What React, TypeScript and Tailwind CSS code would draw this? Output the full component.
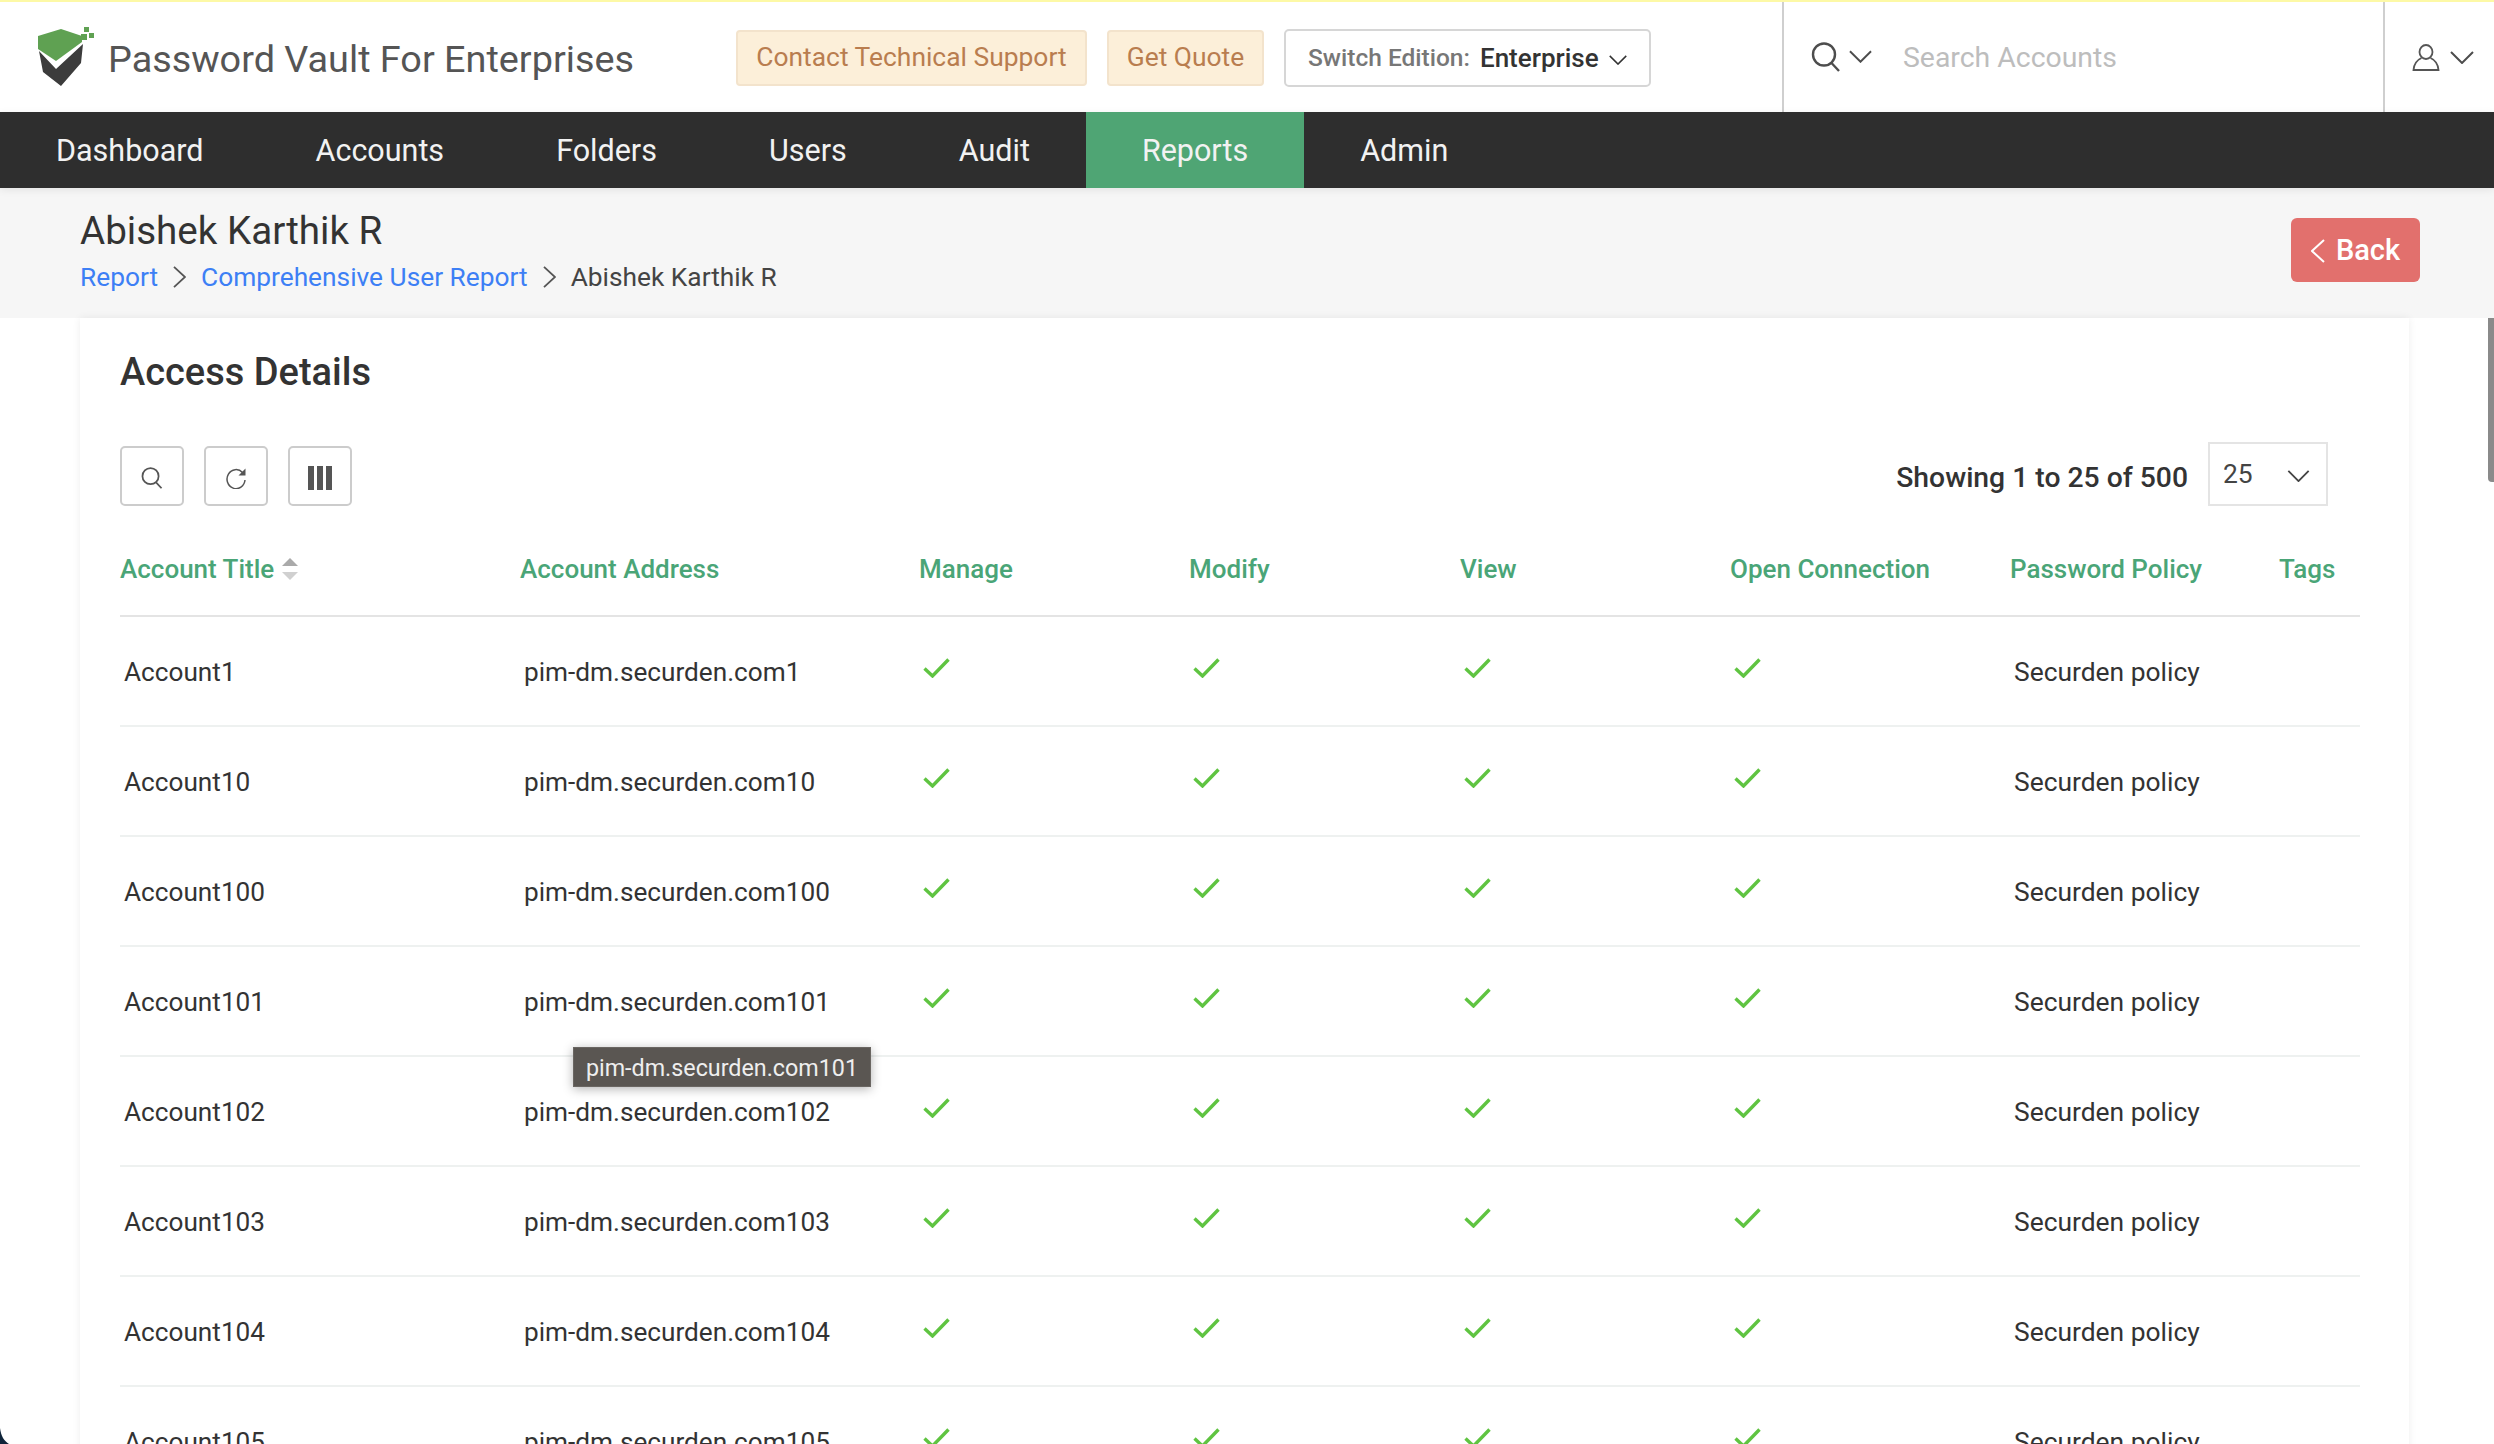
const accounts = ["1", "10", "100", "101", "102", "103", "104", "105"]

const navItems = ["Dashboard", "Accounts", "Folders", "Users", "Audit", "Reports", "Admin"]

function Caret({ className }: { className: string }) {
  return (
    <svg viewBox="0 0 24 13" fill="none" stroke="currentColor" strokeWidth="2" className={className}>
      <polyline points="1,1 12,12 23,1" />
    </svg>
  )
}

function ThinChevron({ className }: { className: string }) {
  return (
    <svg viewBox="0 0 14 24" fill="none" stroke="currentColor" strokeWidth="2" className={className}>
      <polyline points="1,1 13,12 1,23" />
    </svg>
  )
}

function Logo() {
  return (
    <svg viewBox="38 26 56 59" className="h-[59px] w-[56px] shrink-0">
      <polygon points="38,35 61,28 82,35 82,41 56,60 38,48" fill="#5fa152" />
      <polygon points="39,50 56,68 83,43 81,62 61,85 43,71" fill="#3c3c3c" />
      <rect x="84" y="26" width="5" height="5" fill="#5fa152" />
      <rect x="81" y="33" width="6" height="6" fill="#5fa152" />
      <rect x="89" y="32" width="5" height="5" fill="#5fa152" />
    </svg>
  )
}

function SearchIcon({ className }: { className: string }) {
  return (
    <svg viewBox="0 0 30 30" fill="none" stroke="currentColor" strokeWidth="2.4" className={className}>
      <circle cx="13" cy="12.5" r="11" />
      <line x1="20.5" y1="21" x2="28" y2="29" />
    </svg>
  )
}

function UserIcon() {
  return (
    <svg viewBox="0 0 28 27" fill="none" stroke="#555" strokeWidth="1.8" className="h-[27px] w-[28px]">
      <ellipse cx="14" cy="8" rx="6.5" ry="7" />
      <path d="M9.5 14 C5 16 2 20 1.5 26 L26.5 26 C26 20 23 16 18.5 14" />
    </svg>
  )
}

function RefreshIcon() {
  return (
    <svg viewBox="0 0 22 22" fill="none" stroke="#555" strokeWidth="1.5" className="h-[22px] w-[22px]">
      <path d="M17.5 5.5 A9 9.5 0 1 0 20 13" />
      <polygon points="20.5,1.5 20.5,8.5 13.5,8.5" fill="#555" stroke="none" />
    </svg>
  )
}

function ToolButton({ children }: { children: React.ReactNode }) {
  return (
    <button className="flex h-[60px] w-[64px] items-center justify-center rounded-[5px] border-2 border-[#cccccc] bg-white pt-[3px]">
      {children}
    </button>
  )
}

function CheckMark() {
  return (
    <svg viewBox="0 0 27 20" fill="none" stroke="#5fc441" strokeWidth="3.4" className="h-[20px] w-[27px]">
      <polyline points="1.5,10.5 9.5,18 25.5,1.5" />
    </svg>
  )
}

function Row({ id }: { id: string }) {
  return (
    <tr className="h-[110px] border-b-2 border-[#eef1f0] text-[26.2px] text-[#333333]">
      <td className="pl-1 pt-[3px] align-middle">Account{id}</td>
      <td className="pl-1 pt-[3px] align-middle">pim-dm.securden.com{id}</td>
      <td className="pl-1 align-middle"><div className="mb-[6px]"><CheckMark /></div></td>
      <td className="pl-1 align-middle"><div className="mb-[6px]"><CheckMark /></div></td>
      <td className="pl-1 align-middle"><div className="mb-[6px]"><CheckMark /></div></td>
      <td className="pl-1 align-middle"><div className="mb-[6px]"><CheckMark /></div></td>
      <td className="pl-1 pt-[3px] align-middle text-[26.4px]">Securden policy</td>
      <td />
    </tr>
  )
}

export default function App() {
  return (
    <div className="relative h-[1444px] w-[2494px] overflow-hidden bg-white font-['Roboto',sans-serif]">
      <div className="h-[2px] bg-[#fdf9a6]" />

      {/* Top bar */}
      <header className="flex h-[110px] items-stretch bg-white">
        <div className="flex items-center pb-[2px] pl-[38px]">
          <Logo />
          <span className="ml-[14px] mt-[7px] text-[37.8px] leading-none text-[#555555]">Password Vault For Enterprises</span>
        </div>
        <div className="ml-[102px] flex items-center gap-[20px] pt-[2px]">
          <span className="flex h-[56px] w-[351px] items-center justify-center rounded-[4px] border-2 border-[#f3e3cc] bg-[#fcefd9] text-[26.4px] text-[#b97d4f]">
            Contact Technical Support
          </span>
          <span className="flex h-[56px] w-[157px] items-center justify-center rounded-[4px] border-2 border-[#f3e3cc] bg-[#fcefd9] text-[26.4px] text-[#b97d4f]">
            Get Quote
          </span>
          <span className="flex h-[58px] w-[367px] items-center rounded-[5px] border-2 border-[#d6d6d6] bg-white pl-[22px]">
            <span className="text-[24.5px] font-medium text-[#777777]">Switch Edition:</span>
            <span className="ml-[10px] text-[26px] font-medium text-[#333333]">Enterprise</span>
            <Caret className="ml-[10px] mt-[4px] h-[10px] w-[18px] text-[#333333]" />
          </span>
        </div>
        <div className="ml-auto flex w-[601px] items-center border-l-2 border-[#cfcfcf] pl-[27px] pt-[1px]">
          <SearchIcon className="mb-[2px] h-[30px] w-[30px] text-[#4d4d4d]" />
          <Caret className="mb-[2px] ml-[8px] h-[13px] w-[23px] text-[#4d4d4d]" />
          <span className="ml-[31px] mt-[2px] text-[28.4px] text-[#bdbdbd]">Search Accounts</span>
        </div>
        <div className="flex w-[111px] items-center border-l-2 border-[#cfcfcf] pl-[27px]">
          <UserIcon />
          <Caret className="ml-[10px] h-[13px] w-[24px] text-[#4d4d4d]" />
        </div>
      </header>

      {/* Main nav */}
      <nav className="relative z-10 flex h-[76px] bg-[#2e2e2e] shadow-[0_2px_8px_rgba(0,0,0,0.08)]">
        {navItems.map((item) => (
          <a
            key={item}
            className={`flex items-center px-[56px] pt-[2px] text-[30.5px] text-[#f2f2f2] ${item === "Reports" ? "bg-[#4fa574]" : ""}`}
          >
            {item}
          </a>
        ))}
      </nav>

      {/* Page heading */}
      <div className="flex h-[130px] items-center justify-between bg-[#f6f6f6] pl-[80px] pr-[74px]">
        <div className="pb-[1px]">
          <h1 className="text-[38.6px] leading-[44px] text-[#333333]">Abishek Karthik R</h1>
          <div className="mt-[5px] flex items-center text-[26.3px] leading-[38px] text-[#444444]">
            <span className="text-[#3d7ff5]">Report</span>
            <ThinChevron className="mx-[15px] h-[22px] w-[13px] text-[#555555]" />
            <span className="text-[#3d7ff5]">Comprehensive User Report</span>
            <ThinChevron className="mx-[15px] h-[22px] w-[13px] text-[#555555]" />
            <span>Abishek Karthik R</span>
          </div>
        </div>
        <button className="mb-[6px] flex h-[64px] w-[129px] items-center justify-center rounded-[6px] bg-[#e2706d] pt-[2px] text-[29px] font-medium text-white">
          <ThinChevron className="mr-[11px] h-[26px] w-[14px] rotate-180" />
          Back
        </button>
      </div>

      {/* Card */}
      <main className="ml-[80px] w-[2329px] pl-[40px] pr-[49px] pt-[32px] shadow-[0_0_8px_rgba(0,0,0,0.07)]">
        <h2 className="text-[38px] font-medium leading-[44px] text-[#333333]">Access Details</h2>

        <div className="mt-[52px] flex items-start justify-between pr-[32px]">
          <div className="flex gap-[20px]">
            <ToolButton><SearchIcon className="h-[22px] w-[22px] text-[#555555]" /></ToolButton>
            <ToolButton><RefreshIcon /></ToolButton>
            <ToolButton>
              <span className="flex gap-[3px]">
                <span className="h-[24px] w-[6px] bg-[#555555]" />
                <span className="h-[24px] w-[6px] bg-[#555555]" />
                <span className="h-[24px] w-[6px] bg-[#555555]" />
              </span>
            </ToolButton>
          </div>
          <div className="flex items-start">
            <span className="mt-[11px] text-[28.3px] font-medium text-[#333333]">Showing 1 to 25 of 500</span>
            <div className="ml-[20px] flex h-[64px] w-[120px] -translate-y-[4px] items-center justify-between border-2 border-[#e4e4e4] pl-[13px] pr-[16px] pt-[2px] text-[26.4px] text-[#444444]">
              25
              <Caret className="mt-[2px] h-[12px] w-[23px] text-[#444444]" />
            </div>
          </div>
        </div>

        <table className="mt-[27px] w-[2240px] table-fixed border-collapse text-left">
          <colgroup>
            <col className="w-[400px]" />
            <col className="w-[399px]" />
            <col className="w-[270px]" />
            <col className="w-[271px]" />
            <col className="w-[270px]" />
            <col className="w-[280px]" />
            <col className="w-[269px]" />
            <col className="w-[81px]" />
          </colgroup>
          <thead>
            <tr className="h-[79px] border-b-2 border-[#e4e4e4] text-[26px] font-medium text-[#4aa577]">
              <th className="pb-[14px] font-medium">
                <span className="flex items-center">
                  Account Title
                  <span className="ml-[8px] flex flex-col gap-[6px]">
                    <span className="h-0 w-0 border-x-[8px] border-b-[8px] border-x-transparent border-b-[#aaaaaa]" />
                    <span className="h-0 w-0 border-x-[8px] border-t-[8px] border-x-transparent border-t-[#d0d0d0]" />
                  </span>
                </span>
              </th>
              <th className="pb-[14px] font-medium">Account Address</th>
              <th className="pb-[14px] font-medium">Manage</th>
              <th className="pb-[14px] font-medium">Modify</th>
              <th className="pb-[14px] font-medium">View</th>
              <th className="pb-[14px] font-medium">Open Connection</th>
              <th className="pb-[14px] font-medium">Password Policy</th>
              <th className="pb-[14px] font-medium">Tags</th>
            </tr>
          </thead>
          <tbody>
            {accounts.map((id) => (
              <Row key={id} id={id} />
            ))}
          </tbody>
        </table>
      </main>

      {/* Tooltip on the hovered address */}
      <div className="absolute left-[573px] top-[1047px] flex h-[40px] w-[298px] items-center justify-center border border-[#6a6662] bg-[#5a5652] pt-[2px] text-[23.3px] text-[#eeeeee] shadow-[0_2px_10px_rgba(0,0,0,0.3)]">
        pim-dm.securden.com101
      </div>

      {/* Scrollbar thumb */}
      <div className="absolute right-0 top-[318px] h-[164px] w-[6px] rounded-bl-[4px] bg-[#8a8a8a]" />

      {/* Window corner */}
      <svg viewBox="0 0 12 16" className="absolute bottom-0 left-0 h-[16px] w-[12px]">
        <path d="M0 0 C1 8 4 13 9 16 L0 16 Z" fill="#10243a" />
      </svg>
    </div>
  )
}
